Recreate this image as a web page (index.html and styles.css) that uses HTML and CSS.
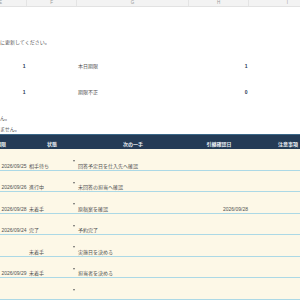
FILE: index.html
```html
<!DOCTYPE html>
<html lang="ja">
<head>
<meta charset="utf-8">
<link rel="stylesheet" href="styles.css">
</head>
<body>
<div class="sheet">
  <div class="grid colhead">
    <div class="ch">E</div><div class="ch">F</div><div class="ch">G</div><div class="ch">H</div><div class="ch">I</div>
  </div>

  <div class="note note1">に更新してください。</div>

  <div class="grid sum sum1">
    <div class="num">1</div><div></div><div class="lbl">本日期限</div><div class="num">1</div><div></div>
  </div>
  <div class="grid sum sum2">
    <div class="num">1</div><div></div><div class="lbl">期限不正</div><div class="num">0</div><div></div>
  </div>

  <div class="note note2">ん。</div>
  <div class="note note3">ません。</div>

  <div class="grid thead">
    <div class="th">期限</div><div class="th">状態</div><div class="th">次の一手</div><div class="th">引継確認日</div><div class="th">注意事項</div>
  </div>

  <div class="grid row">
    <div class="c date">2026/09/25</div>
    <div class="c st"><span class="st-t">相手待ち</span><span class="arr"></span></div>
    <div class="c nx">回答予定日を仕入先へ確認</div>
    <div class="c hd"></div><div class="c"></div>
  </div>
  <div class="grid row">
    <div class="c date">2026/09/26</div>
    <div class="c st"><span class="st-t">進行中</span><span class="arr"></span></div>
    <div class="c nx">未回答の担当へ確認</div>
    <div class="c hd"></div><div class="c"></div>
  </div>
  <div class="grid row">
    <div class="c date">2026/09/28</div>
    <div class="c st"><span class="st-t">未着手</span><span class="arr"></span></div>
    <div class="c nx">原稿案を確認</div>
    <div class="c hd">2026/09/28</div><div class="c"></div>
  </div>
  <div class="grid row">
    <div class="c date">2026/09/24</div>
    <div class="c st"><span class="st-t">完了</span><span class="arr"></span></div>
    <div class="c nx">予約完了</div>
    <div class="c hd"></div><div class="c"></div>
  </div>
  <div class="grid row">
    <div class="c date"></div>
    <div class="c st"><span class="st-t">未着手</span><span class="arr"></span></div>
    <div class="c nx">実施日を決める</div>
    <div class="c hd"></div><div class="c"></div>
  </div>
  <div class="grid row">
    <div class="c date">2026/09/29</div>
    <div class="c st"><span class="st-t">未着手</span><span class="arr"></span></div>
    <div class="c nx">担当者を決める</div>
    <div class="c hd"></div><div class="c"></div>
  </div>
  <div class="grid row">
    <div class="c date"></div>
    <div class="c st"><span class="st-t"></span><span class="arr"></span></div>
    <div class="c nx"></div>
    <div class="c hd"></div><div class="c"></div>
  </div>
</div>
</body>
</html>
```

FILE: styles.css
```css
html, body {
  margin: 0;
  padding: 0;
}
body {
  width: 300px;
  height: 300px;
  overflow: hidden;
  background: #ffffff;
  font-family: "Liberation Sans", "Noto Sans CJK JP", sans-serif;
  font-size: 5px;
  color: #555555;
}
.sheet {
  margin-left: -25px;
  width: 352px;
}
.grid {
  display: grid;
  grid-template-columns: 52px 50px 112px 60px 78px;
}
.colhead {
  height: 6px;
  background: #f3f3f3;
  border-bottom: 1px solid #e2e2e2;
}
.ch {
  text-align: center;
  line-height: 6px;
  font-size: 4.5px;
  color: #9a9a9a;
  border-right: 1px solid #e4e4e4;
}
.note {
  padding-left: 25px;
  height: 10px;
  line-height: 10px;
  color: #555555;
  white-space: nowrap;
}
.note1 { margin-top: 30px; }
.note2 { margin-top: 16px; }
.note3 { margin-top: 2px; height: 9px; line-height: 9px; }
.sum {
  height: 10px;
  line-height: 10px;
}
.sum1 { margin-top: 14px; }
.sum2 { margin-top: 16px; }
.num {
  text-align: right;
  padding-right: 1.5px;
  font-weight: bold;
  color: #2b3b55;
}
.lbl {
  padding-left: 1px;
  color: #555555;
}
.thead {
  height: 14px;
  background: #243b56;
  border-top: 1px solid #3a6788;
  align-items: end;
}
.th {
  text-align: center;
  line-height: 7px;
  padding-bottom: 1px;
  color: #e8edf2;
  font-weight: 600;
}
.row {
  height: 20.5px;
  background: #fdf8e7;
  border-bottom: 1px solid #acd9e6;
  align-items: end;
}
.c {
  line-height: 6px;
  padding-bottom: 1px;
  white-space: nowrap;
  overflow: hidden;
  color: #505050;
}
.date {
  text-align: right;
  padding-right: 0.5px;
}
.st {
  display: flex;
  justify-content: space-between;
  align-self: stretch;
  padding-bottom: 0;
}
.st-t {
  align-self: flex-end;
  padding-left: 2px;
  padding-bottom: 1px;
  line-height: 6px;
}
.arr {
  width: 0;
  height: 0;
  margin-top: 11px;
  margin-right: 2px;
  border-left: 1.5px solid transparent;
  border-right: 1.5px solid transparent;
  border-top: 2px solid #666666;
}
.nx {
  padding-left: 1px;
}
.hd {
  text-align: right;
  padding-right: 1px;
}
```
